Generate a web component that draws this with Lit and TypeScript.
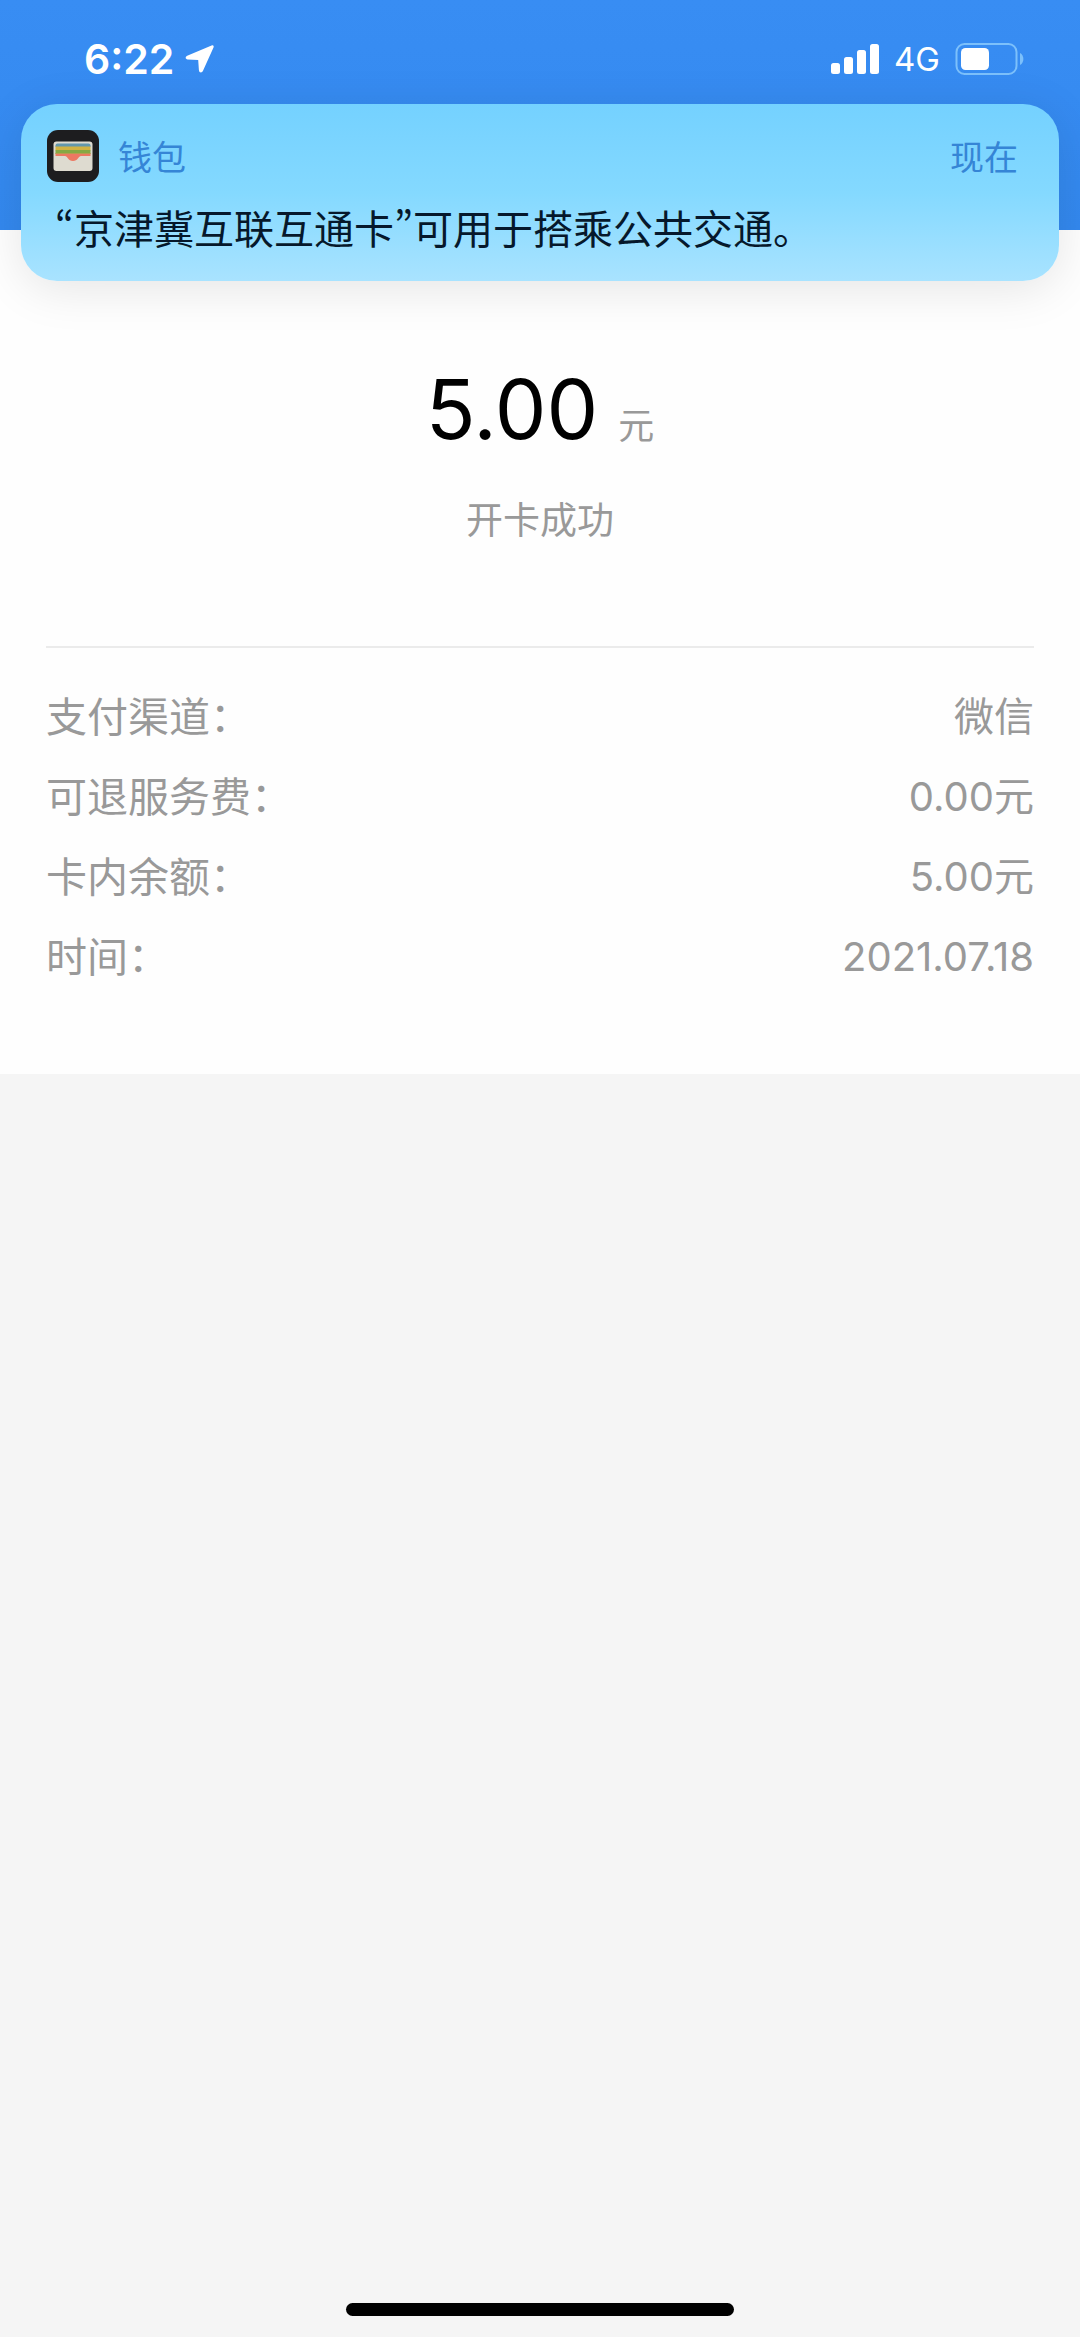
import { LitElement, html, css, svg } from "lit";
import { customElement } from "lit/decorators.js";

interface Detail {
  label: string;
  value: string;
}

const details: Detail[] = [
  { label: "支付渠道：", value: "微信" },
  { label: "可退服务费：", value: "0.00元" },
  { label: "卡内余额：", value: "5.00元" },
  { label: "时间：", value: "2021.07.18" },
];

const signalBars = [
  { x: 0, h: 11 },
  { x: 13, h: 17 },
  { x: 26, h: 24 },
  { x: 39, h: 30 },
];

@customElement("status-bar")
class StatusBar extends LitElement {
  static styles = css`
    :host {
      display: flex;
      align-items: center;
      justify-content: space-between;
      height: 104px;
      padding: 14px 56px 0 84px;
      box-sizing: border-box;
      color: #fff;
    }
    .group {
      display: flex;
      align-items: center;
    }
    .left {
      gap: 11px;
    }
    .right {
      gap: 15px;
    }
    .time {
      font-size: 41px;
      font-weight: 600;
      line-height: 48px;
    }
    .network {
      font-size: 33px;
      line-height: 48px;
    }
    svg {
      display: block;
    }
  `;

  render() {
    return html`
      <div class="group left">
        <span class="time">6:22</span>
        <svg width="30" height="30" viewBox="0 0 30 30" aria-hidden="true">
          <path
            d="M26.6 1.4 2.2 11.8C0 12.8.3 15.200 2.600 15.400L13.200 16 13.900 25.900C14.100 28.900 16.900 29.300 18 26.700L28.500 3.600C29.200 1.900 28.300.8 26.600 1.400Z"
            fill="#fff"
          />
        </svg>
      </div>
      <div class="group right">
        <svg width="48" height="30" viewBox="0 0 48 30" aria-hidden="true">
          ${signalBars.map(
            (bar) => svg`<rect x=${bar.x} y=${30 - bar.h} width="9" height=${bar.h} rx="2.5" fill="#fff" />`
          )}
        </svg>
        <span class="network">4G</span>
        <svg width="69" height="32" viewBox="0 0 69 32" aria-hidden="true">
          <rect x="1.500" y="1" width="60" height="30" rx="8" fill="none" stroke="#7cc0fb" stroke-width="2" />
          <rect x="6" y="5" width="28" height="22" rx="4.5" fill="#fff" />
          <path d="M65 10C69.500 12 69.500 20 65 22Z" fill="#7cc0fb" />
        </svg>
      </div>
    `;
  }
}

@customElement("notice-banner")
class NoticeBanner extends LitElement {
  static styles = css`
    :host {
      display: block;
      box-sizing: border-box;
      padding: 26px 41px 24px 26px;
      border-radius: 36px;
      background: linear-gradient(#74d1ff, #84d9ff 50%, #a9e3ff);
      box-shadow: 0 8px 48px rgba(0, 0, 0, 0.1);
    }
    .head {
      display: flex;
      align-items: center;
      gap: 19px;
      height: 52px;
      color: #3585d6;
      font-size: 34px;
      line-height: 52px;
    }
    .source,
    .when {
      padding-top: 4px;
    }
    .when {
      margin-left: auto;
    }
    .message {
      margin: 15px 0 0;
      padding-left: 8px;
      color: #06182b;
      font-family: "Noto Sans CJK SC", sans-serif;
      font-feature-settings: "pwid";
      font-size: 40px;
      line-height: 60px;
    }
    svg {
      display: block;
    }
  `;

  render() {
    return html`
      <div class="head">
        <svg width="52" height="52" viewBox="0 0 52 52" aria-hidden="true">
          <rect width="52" height="52" rx="11" fill="#1d1d1f" />
          <rect x="6.500" y="11.500" width="39" height="29.500" rx="3" fill="#dedbd0" />
          <path d="M8.500 17V15.500Q8.500 13.500 10.500 13.500H41.500Q43.500 13.500 43.500 15.500V17Z" fill="#6398ac" />
          <rect x="8.500" y="16.500" width="35" height="4" fill="#d1b342" />
          <rect x="8.500" y="20" width="35" height="4" fill="#86a843" />
          <path d="M8.500 23.500H43.500V26H34C31.500 26 31 31 26 31S20.500 26 18 26H8.500Z" fill="#ec7862" />
          <path d="M8.500 23H43.500V24H8.500Z" fill="#b79a50" />
        </svg>
        <span class="source">钱包</span>
        <time class="when">现在</time>
      </div>
      <p class="message">“京津冀互联互通卡”可用于搭乘公共交通。</p>
    `;
  }
}

@customElement("app-root")
class AppRoot extends LitElement {
  static styles = css`
    :host {
      display: flex;
      flex-direction: column;
      position: relative;
      min-height: 100vh;
      background: #f5f5f5;
      font-family: Inter, "Noto Sans CJK SC", sans-serif;
    }
    .header {
      height: 230px;
      background: linear-gradient(#388df3, #3388ee);
    }
    .banner {
      position: absolute;
      top: 104px;
      left: 21px;
      right: 21px;
    }
    .receipt {
      padding: 132px 46px 77px;
      background: #fefefe;
      color: #999;
    }
    .amount {
      display: flex;
      align-items: baseline;
      justify-content: center;
      gap: 20px;
      margin: 0;
      line-height: 96px;
      font-size: 36px;
    }
    .figure {
      color: #000;
      font-size: 82px;
    }
    .result {
      margin: 19px 0 0;
      text-align: center;
      font-size: 37px;
      line-height: 56px;
    }
    .details {
      margin: 97px 0 0;
      padding-top: 29px;
      border-top: 2px solid #ebebeb;
    }
    .row {
      display: flex;
      justify-content: space-between;
      font-size: 40px;
      line-height: 80px;
    }
    .row dt {
      font-size: 41px;
    }
    .row dd {
      margin: 0;
    }
    .home {
      width: 36%;
      height: 13px;
      margin: auto auto 21px;
      border-radius: 7px;
      background: #000;
    }
  `;

  render() {
    return html`
      <header class="header"><status-bar></status-bar></header>
      <notice-banner class="banner" role="status" lang="zh-CN"></notice-banner>
      <main class="receipt" lang="zh-CN">
        <p class="amount"><span class="figure">5.00</span><span>元</span></p>
        <p class="result">开卡成功</p>
        <dl class="details">
          ${details.map(
            (item) => html`<div class="row"><dt>${item.label}</dt><dd>${item.value}</dd></div>`
          )}
        </dl>
      </main>
      <div class="home"></div>
    `;
  }
}
